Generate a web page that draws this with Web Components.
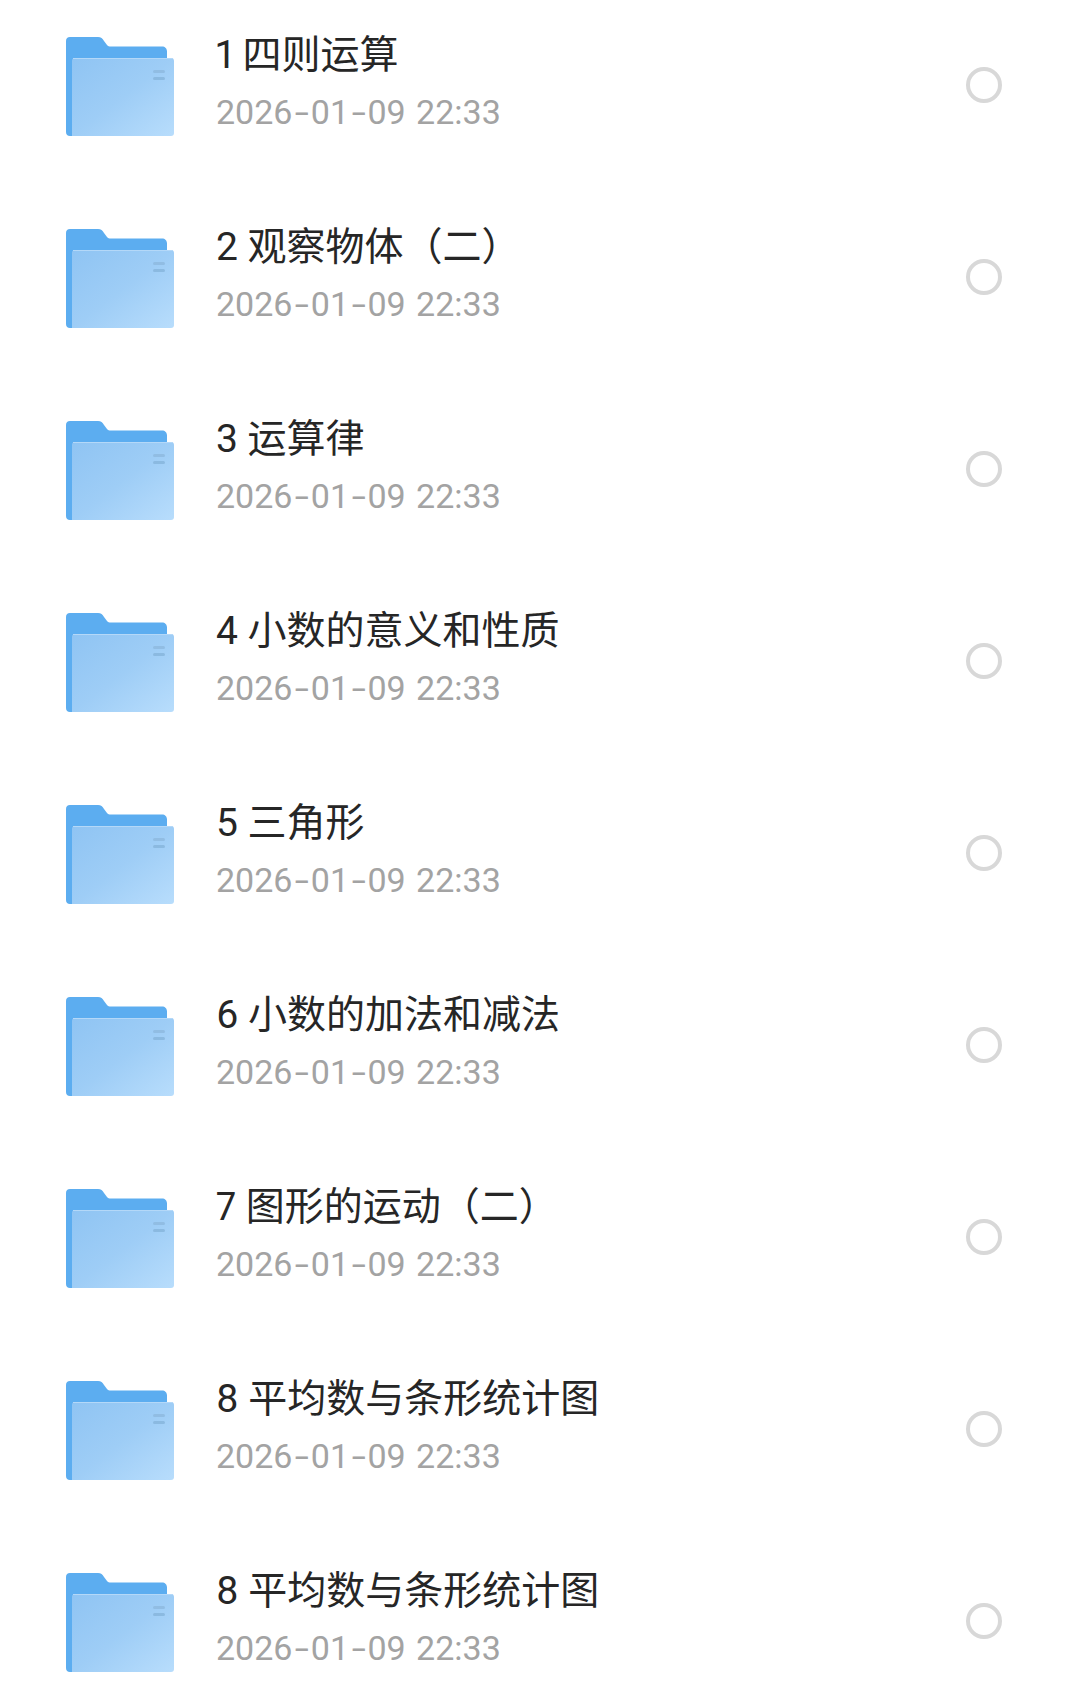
<!DOCTYPE html>
<html lang="zh">
<head>
<meta charset="utf-8">
<title>文件列表</title>
<style>
    html, body { margin: 0; height: 100%; overflow: hidden; background: #fff; }
</style>
</head>
<body>
<file-list>
    <file-row name="1 四则运算" time="2026-01-09 22:33"></file-row>
    <file-row name="2 观察物体（二）" time="2026-01-09 22:33"></file-row>
    <file-row name="3 运算律" time="2026-01-09 22:33"></file-row>
    <file-row name="4 小数的意义和性质" time="2026-01-09 22:33"></file-row>
    <file-row name="5 三角形" time="2026-01-09 22:33"></file-row>
    <file-row name="6 小数的加法和减法" time="2026-01-09 22:33"></file-row>
    <file-row name="7 图形的运动（二）" time="2026-01-09 22:33"></file-row>
    <file-row name="8 平均数与条形统计图" time="2026-01-09 22:33"></file-row>
    <file-row name="8 平均数与条形统计图" time="2026-01-09 22:33"></file-row>
</file-list>
<script>
/**
 * Folder icon with the darker back sheet and the pale front sheet.
 */
class FolderIcon extends HTMLElement {
    static count = 0;
    constructor() {
        super();
        this.attachShadow({mode: 'open'});
    }
    connectedCallback() {
        const id = 'front' + FolderIcon.count++;
        this.shadowRoot.innerHTML = `
            <style>
                :host { display: block; width: 108px; height: 99px; flex: none; }
                svg { display: block; }
            </style>
            <svg width="108" height="99" viewBox="0 0 108 99">
                <defs>
                    <linearGradient id="${id}" x1="0" y1="0" x2="1" y2="1">
                        <stop offset="0" stop-color="#8fc4f3"/>
                        <stop offset="0.5" stop-color="#9ecdf6"/>
                        <stop offset="1" stop-color="#b8ddfc"/>
                    </linearGradient>
                </defs>
                <path d="M4 0H32C35 0 36.500 1.500 38 4L41 8C42 9 43 9.500 45 9.500H96C99 9.500 101 11.500 101 14.500V30H6V99H4C1.500 99 0 97.500 0 95V4C0 1.500 1.500 0 4 0Z" fill="#5cadf0"/>
                <path d="M9 21H105C107 21 108 22 108 24V96C108 98 107 99 105 99H6V24C6 22 7 21 9 21Z" fill="url(#${id})"/>
                <path d="M7 21.500H107" stroke="#b4d8f8" stroke-width="1"/>
                <rect x="87" y="33" width="12" height="3" rx="1.500" fill="#8db9de" opacity="0.8"/>
                <rect x="87" y="40" width="12" height="3" rx="1.500" fill="#86b4db" opacity="0.8"/>
            </svg>
        `;
    }
}

/**
 * One row of the list: icon, name, time and the round selector.
 */
class FileRow extends HTMLElement {
    constructor() {
        super();
        this.attachShadow({mode: 'open'});
    }
    connectedCallback() {
        // the hyphens of the time are wider in this font than in Roboto
        const time = this.getAttribute('time').replaceAll('-', '<span class="dash">-</span>');
        this.shadowRoot.innerHTML = `
            <style>
                :host {
                    display: flex;
                    align-items: center;
                    box-sizing: border-box;
                    height: 192px;
                    padding: 37px 71px 56px 66px;
                }
                .text {
                    flex: 1;
                    display: flex;
                    flex-direction: column;
                    gap: 13px;
                    margin-left: 42px;
                    margin-top: -7px;
                }
                .name {
                    font: 400 39px/44px Roboto, "Noto Sans CJK SC", sans-serif;
                    font-variant-numeric: proportional-nums;
                    color: #262626;
                }
                .time {
                    font: 400 34px/44px Roboto, "Noto Sans CJK SC", sans-serif;
                    color: #a3a3a3;
                    word-spacing: 2px;
                }
                .dash {
                    display: inline-block;
                    margin: 0 4.500px;
                    transform: scaleX(1.500);
                }
                .check {
                    box-sizing: border-box;
                    width: 36px;
                    height: 36px;
                    border: 4px solid #d8d8d8;
                    border-radius: 50%;
                    margin-top: -3px;
                }
            </style>
            <folder-icon></folder-icon>
            <div class="text">
                <div class="name">${this.getAttribute('name')}</div>
                <div class="time">${time}</div>
            </div>
            <div class="check"></div>
        `;
    }
}

/**
 * The list that holds all rows.
 */
class FileList extends HTMLElement {
    constructor() {
        super();
        this.attachShadow({mode: 'open'});
        this.shadowRoot.innerHTML = `
            <style>
                :host { display: block; height: 1691px; overflow: hidden; background: #fff; }
            </style>
            <slot></slot>
        `;
    }
}

customElements.define('folder-icon', FolderIcon);
customElements.define('file-row', FileRow);
customElements.define('file-list', FileList);
</script>
</body>
</html>
